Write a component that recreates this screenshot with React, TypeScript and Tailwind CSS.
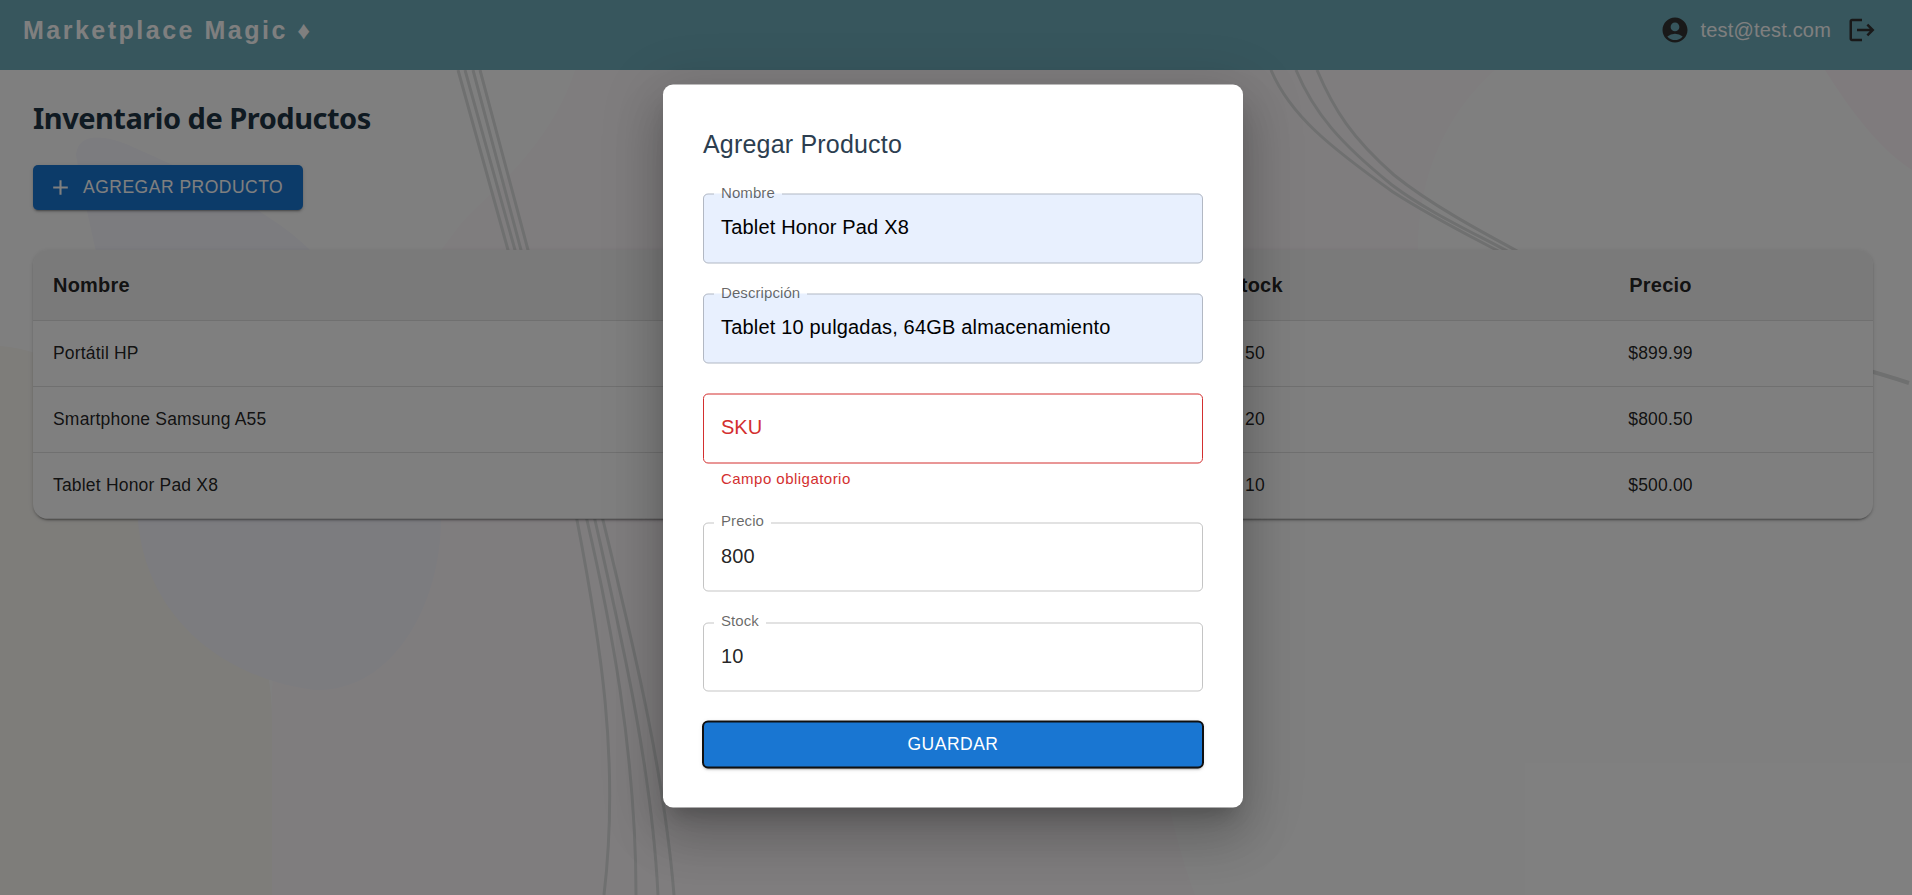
import { MdAccountCircle, MdAdd, MdLogout } from "react-icons/md";

type Product = { name: string; stock: string; price: string };

const products: Product[] = [
  { name: "Portátil HP", stock: "50", price: "$899.99" },
  { name: "Smartphone Samsung A55", stock: "20", price: "$800.50" },
  { name: "Tablet Honor Pad X8", stock: "10", price: "$500.00" },
];

function Backdrop() {
  return (
    <svg className="absolute inset-0 -z-10 h-full w-full" viewBox="0 0 1912 895" preserveAspectRatio="none" fill="none">
      <rect width="1912" height="895" fill="#ffffff" />
      <path d="M0 346C60 350 140 400 200 520C240 600 272 640 272 720V895H0Z" fill="#fcfaf5" />
      <path d="M575 70C550 150 480 200 460 225C440 250 420 280 400 330C300 480 272 560 272 720V895H1195C1160 800 1150 700 1150 600L1418 250C1418 170 1450 110 1495 70Z" fill="#fffafd" />
      <path d="M1825 70C1850 110 1880 150 1912 170V70Z" fill="#fff7fb" />
      <path d="M76 155C78 132 105 134 135 148C220 185 280 220 310 250C390 310 442 420 441 520C440 610 390 692 315 690C230 680 137 620 137 500C137 400 92 250 76 155Z" fill="#f8f8ff" />
      <g stroke="#dfe0e0" strokeWidth="3">
        <path d="M458 70L508 250L577 520C600 640 620 760 604 895" />
        <path d="M465 70L515 250L587 520C610 620 636 750 636 895" />
        <path d="M473 70L521 250L595 520C622 640 652 770 658 895" />
        <path d="M480 70L528 250L603 520C632 640 664 770 674 895" />
        <path d="M1271 70C1290 115 1330 147 1393 192C1430 216 1466 234 1500 252" />
        <path d="M1296 70C1314 113 1340 143 1392 185C1428 212 1472 232 1509 252" />
        <path d="M1317 70C1334 110 1352 138 1394 175C1430 204 1478 230 1519 252" />
        <path d="M1509 252C1620 320 1780 340 1909 383" strokeWidth="4" />
      </g>
    </svg>
  );
}

type FieldProps = { label: string; value: string; filled?: boolean; height: string; legendLeading?: string };

function Field({ label, value, filled, height, legendLeading = "leading-[16px]" }: FieldProps) {
  return (
    <div className={`relative ${height}`}>
      <div className={`h-full rounded-[5px] px-[18px] pt-[19px] text-[20px] leading-[29px] tracking-[0.18px] ${filled ? "bg-[#e8f0fe] text-black" : "text-black/87"}`}>
        {value}
      </div>
      <fieldset className="absolute inset-x-0 -top-[9px] bottom-0 rounded-[5px] border border-black/23 px-[10px]">
        <legend className={`h-[18px] px-[7px] text-[15px] tracking-[0.08px] text-black/60 ${legendLeading}`}>{label}</legend>
      </fieldset>
    </div>
  );
}

export default function App() {
  return (
    <div className="relative isolate h-[895px] w-full overflow-hidden font-['Liberation_Sans',Arial,sans-serif] text-black/87">
      <Backdrop />
      <header className="flex h-[70px] items-start justify-between bg-[#6eacba] pl-[23px] pr-[35px] pt-[10px]">
        <div className="text-[25px] font-bold leading-[40px] tracking-[2.5px] text-white">Marketplace Magic ♦</div>
        <div className="flex h-10 items-center text-[#333]">
          <MdAccountCircle size={30} />
          <span className="ml-[10px] mr-[16px] text-[20px] leading-[30px] tracking-[0.19px] text-white">test@test.com</span>
          <MdLogout size={30} />
        </div>
      </header>
      <main className="px-[33px] pt-[28px]">
        <h1 className="font-['Noto_Sans','Open_Sans',sans-serif] text-[29px] font-bold leading-[40px] tracking-[-0.5px] text-[#1f3444]">Inventario de Productos</h1>
        <button className="mt-[27px] flex h-[45px] w-[270px] items-center rounded-[5px] bg-[#1976d2] pl-[15px] text-[17.5px] tracking-[0.5px] text-white shadow-[0_3px_1px_-2px_rgba(0,0,0,0.2),0_2px_2px_0_rgba(0,0,0,0.14),0_1px_5px_0_rgba(0,0,0,0.12)]">
          <MdAdd size={25} className="mr-[10px]" />
          AGREGAR PRODUCTO
        </button>
        <div className="mt-[40px] w-[1840px] overflow-hidden rounded-[15px] bg-white shadow-[0_3px_1px_-2px_rgba(0,0,0,0.2),0_2px_2px_0_rgba(0,0,0,0.14),0_1px_5px_0_rgba(0,0,0,0.12)]">
          <div className="grid h-[71px] grid-cols-[1029px_386px_425px] items-center border-b border-[#e0e0e0] bg-[#f5f5f5] text-[20px] font-bold tracking-[0.2px]">
            <span className="pl-[20px]">Nombre</span>
            <span className="text-center">Stock</span>
            <span className="text-center">Precio</span>
          </div>
          {products.map((p) => (
            <div key={p.name} className="grid h-[66px] grid-cols-[1029px_386px_425px] items-center border-b border-[#e0e0e0] text-[17.5px] tracking-[0.19px]">
              <span className="pl-[20px]">{p.name}</span>
              <span className="text-center">{p.stock}</span>
              <span className="text-center">{p.price}</span>
            </div>
          ))}
        </div>
      </main>

      <div className="absolute inset-0 bg-black/50" />
      <section
        role="dialog"
        className="absolute left-[953px] top-[446px] flex h-[723px] w-[580px] -translate-x-1/2 -translate-y-1/2 flex-col rounded-[10px] bg-white px-[40px] pt-[39px] shadow-[0_14px_19px_-9px_rgba(0,0,0,0.2),0_30px_48px_4px_rgba(0,0,0,0.14),0_11px_58px_10px_rgba(0,0,0,0.12)]"
      >
        <h2 className="mb-[30px] text-[25px] leading-[40px] tracking-[0.19px] text-[#2c3e50]">Agregar Producto</h2>
        <Field label="Nombre" value="Tablet Honor Pad X8" filled height="h-[70px]" />
        <div className="h-[30px]" />
        <Field label="Descripción" value="Tablet 10 pulgadas, 64GB almacenamiento" filled height="h-[70px]" />
        <div className="mt-[30px] h-[70px] rounded-[5px] border border-[#d32f2f] px-[17px] pt-[18px] text-[20px] leading-[29px] text-[#d32f2f]">SKU</div>
        <p className="mb-[32px] mt-[2px] h-[25px] px-[18px] text-[15px] leading-[25px] tracking-[0.47px] text-[#d32f2f]">Campo obligatorio</p>
        <Field label="Precio" value="800" height="h-[69px]" legendLeading="leading-[14px]" />
        <div className="h-[31px]" />
        <Field label="Stock" value="10" height="h-[69px]" legendLeading="leading-[14px]" />
        <button className="mt-[30px] h-[46px] rounded-[5px] bg-[#1976d2] pb-[2px] text-[17.5px] tracking-[0.5px] text-white shadow-[0_3px_1px_-2px_rgba(0,0,0,0.2),0_2px_2px_0_rgba(0,0,0,0.14),0_1px_5px_0_rgba(0,0,0,0.12)] outline-2 -outline-offset-1 outline-[#101010]">
          GUARDAR
        </button>
      </section>
    </div>
  );
}
